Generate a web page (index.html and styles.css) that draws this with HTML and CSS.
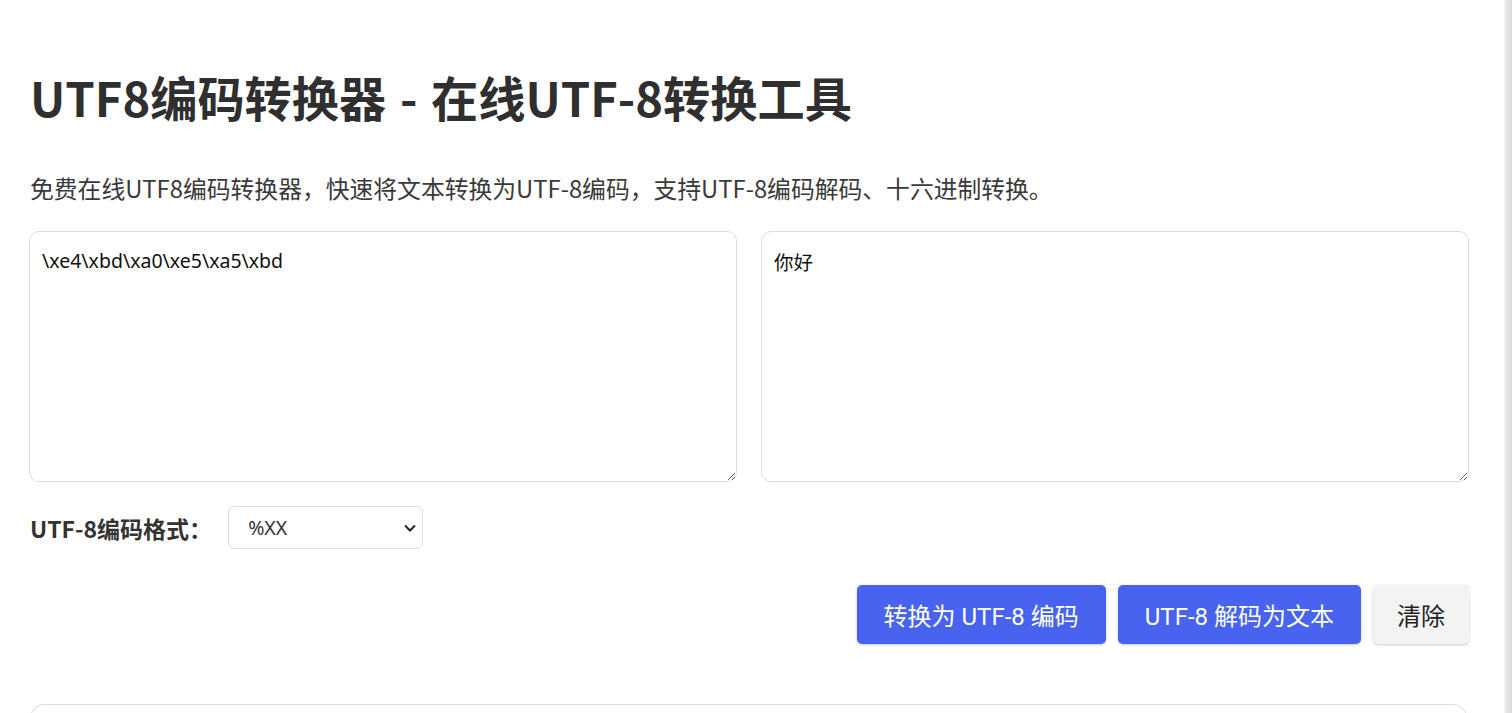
FILE: index.html
```html
<!DOCTYPE html>
<html lang="zh-CN">
<head>
    <meta charset="UTF-8">
    <meta name="viewport" content="width=device-width, initial-scale=1.0">
    <title>UTF8编码转换器 - 在线UTF-8转换工具</title>
    <link rel="stylesheet" href="styles.css">
</head>
<body>
    <div class="page">
        <h1>UTF8编码转换器 - 在线UTF-8转换工具</h1>
        <p class="intro">免费在线UTF8编码转换器，快速将文本转换为UTF-8编码，支持UTF-8编码解码、十六进制转换。</p>

        <!-- input / output -->
        <div class="editors">
            <textarea id="input" spellcheck="true">\xe4\xbd\xa0\xe5\xa5\xbd</textarea>
            <textarea id="output" spellcheck="false">你好</textarea>
        </div>

        <div class="options">
            <label for="format">UTF-8编码格式：</label>
            <div class="select-wrap">
                <select id="format">
                    <option>%XX</option>
                    <option>\xXX</option>
                    <option>0xXX</option>
                    <option>XX</option>
                </select>
                <svg class="chevron" width="14" height="14" viewBox="0 0 14 14">
                    <path d="M2 4.5 L7 9.5 L12 4.5" fill="none" stroke="#222" stroke-width="2"/>
                </svg>
            </div>
        </div>

        <div class="actions">
            <button class="btn primary">转换为 UTF-8 编码</button>
            <button class="btn primary">UTF-8 解码为文本</button>
            <button class="btn plain">清除</button>
        </div>

        <div class="info-box"></div>
    </div>
</body>
</html>
```

FILE: styles.css
```css
html, body {
    margin: 0;
    height: 100%;
    overflow: hidden;
}
body {
    background: linear-gradient(to right, #fff 1504px, #ececec 1505px, #d9d9d9);
    font-family: "Noto Sans CJK SC", sans-serif;
    color: #333;
}
.page {
    width: 1504px;
    box-sizing: border-box;
    padding: 69px 35px 0 29px;
    background-color: #fff;
    border-radius: 0 12px 0 0;
    min-height: 100%;
}
h1 {
    margin: 0;
    font-size: 47.2px;
    line-height: 1.2;
    font-weight: 700;
    color: #2f2f2f;
    padding-left: 1px;
    word-spacing: 3px;
}
.intro {
    margin: 44px 0 0 1px;
    font-size: 23.8px;
    line-height: 1.5;
    color: #3a3a3a;
}
.editors {
    display: grid;
    grid-template-columns: 1fr 1fr;
    gap: 24px;
    margin-top: 26px;
}
.editors textarea {
    box-sizing: border-box;
    height: 251px;
    padding: 15px 12px 12px;
    border: 1px solid #ddd;
    border-radius: 10px;
    font-family: "Noto Sans", "Noto Sans CJK SC", sans-serif;
    font-size: 19.5px;
    color: #111;
    background-color: #fff;
    outline: none;
}
.options {
    display: flex;
    align-items: center;
    gap: 16px;
    margin-top: 24px;
}
.options label {
    font-size: 23px;
    font-weight: 700;
    color: #333;
    padding-left: 1px;
}
.select-wrap {
    position: relative;
}
.select-wrap select {
    appearance: none;
    -webkit-appearance: none;
    width: 195px;
    height: 43px;
    padding: 0 19px;
    border: 1px solid #ddd;
    border-radius: 6px;
    background-color: #fff;
    font-family: "Noto Sans", sans-serif;
    font-size: 19.5px;
    color: #333;
}
.chevron {
    position: absolute;
    right: 6px;
    top: 15px;
    pointer-events: none;
}
.actions {
    display: flex;
    justify-content: flex-end;
    gap: 12px;
    margin-top: 36px;
}
.btn {
    height: 59px;
    padding: 0 24px;
    border: none;
    border-radius: 5px;
    font-family: Roboto, "Noto Sans CJK SC", sans-serif;
    font-size: 24px;
    cursor: pointer;
    box-shadow: 0 1px 3px rgba(0, 0, 0, 0.2);
}
.btn.primary {
    padding: 0 27px;
    background-color: #4863ef;
    color: #fff;
}
.btn.plain {
    background-color: #f3f3f3;
    color: #222;
}
.info-box {
    margin: 60px 2px 0 1px;
    height: 200px;
    border: 1px solid #ddd;
    border-radius: 14px;
}
```
